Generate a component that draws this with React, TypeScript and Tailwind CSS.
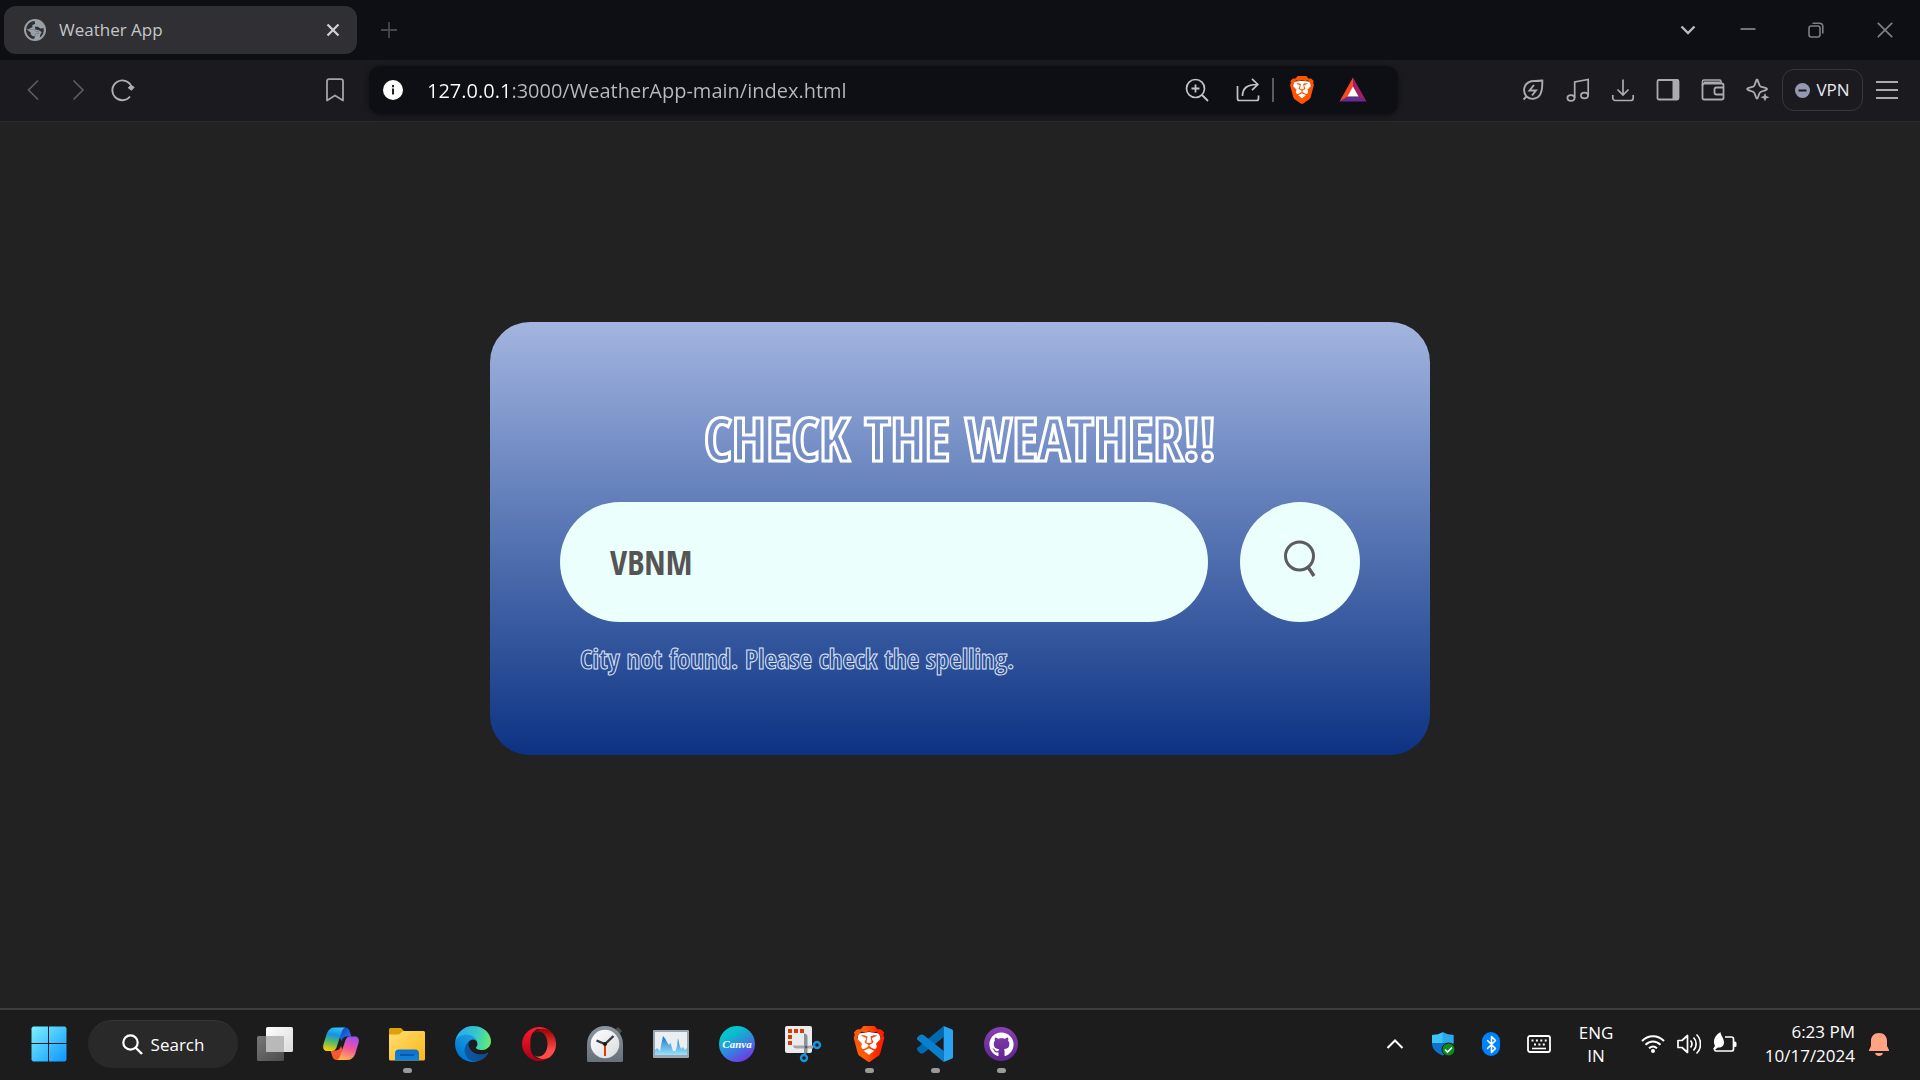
import React, { useState } from "react";
import { Bluetooth } from "lucide-react";
import { SiBrave } from "react-icons/si";
import { FaGithub } from "react-icons/fa";

type SvgProps = { size: number; box?: string; children: React.ReactNode; className?: string };

function Svg({ size, box, children, className }: SvgProps) {
  return (
    <svg width={size} height={size} viewBox={box ?? `0 0 ${size} ${size}`} fill="none" className={className} aria-hidden="true">
      {children}
    </svg>
  );
}

function IconButton({ label, className, children }: { label: string; className: string; children: React.ReactNode }) {
  return (
    <button type="button" aria-label={label} className={`grid shrink-0 place-items-center ${className}`}>
      {children}
    </button>
  );
}

/* ---------- Title bar ---------- */

function TitleBar() {
  return (
    <header className="flex h-[60px] items-center bg-[#0e0f14] pl-1">
      <div className="flex h-12 w-[353px] items-center rounded-xl bg-[#302f33] pr-3 pl-5">
        <Svg size={22} box="0 0 22 22">
          <circle cx="11" cy="11" r="11" fill="#9aa0a8" />
          <path d="M2.200 10C2.600 6 6 2.400 10.500 2.100L11.200 4.800L8.200 6.300L8.500 8.300L6 9.200L5 10.300H10L11.800 12.200H14.300V15H11.500L10.300 19.800C5.500 19.500 2 15.500 2.200 10Z" fill="#302f33" />
          <path d="M2.200 10.500L6.800 14V16L9.500 17.300V19.800C5 19.200 2 15 2.200 10.500Z" fill="#302f33" />
          <path d="M2.300 9.800L5 10.300L10 10.300L11.800 12.200L14.300 12.400V14.800H11.500L10.800 17.300L9 17.200L6.800 15.500V13.800Z" fill="#9aa0a8" />
          <path d="M10.800 7.800H13.800L16.500 9.500L19.700 9.300C20.200 13.500 18.500 17 15.800 18.600L16.300 15.500L17.800 13.300L15.500 11.500L11.500 10.500Z" fill="#302f33" />
        </Svg>
        <span className="ml-[13px] flex-1 text-[17px] text-[#c6c6c8]">Weather App</span>
        <IconButton label="Close tab" className="size-6">
          <Svg size={14}>
            <path d="M1.500 1.500L12.500 12.500M12.500 1.500L1.500 12.500" stroke="#d2d2d4" strokeWidth="2.200" />
          </Svg>
        </IconButton>
      </div>
      <IconButton label="New tab" className="ml-2 size-12">
        <Svg size={16}>
          <path d="M8 0V16M0 8H16" stroke="#47474b" strokeWidth="1.800" />
        </Svg>
      </IconButton>
      <div className="flex-1" />
      <IconButton label="Search tabs" className="h-12 w-12">
        <Svg size={16}>
          <path d="M1.500 4.500L8 11L14.500 4.500" stroke="#b9b9bd" strokeWidth="2.400" />
        </Svg>
      </IconButton>
      <IconButton label="Minimize" className="ml-0.5 h-12 w-[68px]">
        <Svg size={16}>
          <path d="M0.500 7H15.500" stroke="#7f7f83" strokeWidth="1.800" />
        </Svg>
      </IconButton>
      <IconButton label="Restore" className="h-12 w-[68px]">
        <Svg size={16}>
          <rect x="1" y="4" width="11" height="11" rx="2.200" stroke="#7f7f83" strokeWidth="1.600" />
          <path d="M4.500 1.200H11.500A3.300 3.300 0 0 1 14.800 4.500V11.500" stroke="#7f7f83" strokeWidth="1.600" />
        </Svg>
      </IconButton>
      <IconButton label="Close window" className="h-12 w-[70px]">
        <Svg size={16}>
          <path d="M0.800 0.800L15.200 15.200M15.200 0.800L0.800 15.200" stroke="#7f7f83" strokeWidth="1.700" />
        </Svg>
      </IconButton>
    </header>
  );
}

/* ---------- Toolbar ---------- */

function BraveMark({ size, gradient }: { size: number; gradient?: boolean }) {
  return (
    <span className="relative grid place-items-center">
      <Svg size={size} box="0 0 24 24" className="absolute">
        <path d="M5 5L12 4L19 5L20 10L17 17L12 21L7 17L4 10Z" fill="#fff" />
      </Svg>
      <svg width="0" height="0" className="absolute" aria-hidden="true">
        <defs>
          <linearGradient id="brave" x1="0" x2="1" y1="0" y2="0">
            <stop offset="0.4" stopColor="#ff5a0a" />
            <stop offset="0.8" stopColor="#ff2000" />
          </linearGradient>
        </defs>
      </svg>
      <SiBrave size={size} fill={gradient ? "url(#brave)" : "#ff5500"} className="relative" />
    </span>
  );
}

function Toolbar() {
  const [url, setUrl] = useState("127.0.0.1:3000/WeatherApp-main/index.html");
  return (
    <nav aria-label="Browser toolbar" className="flex h-[62px] items-center border-b border-[#29282b] bg-[#1b1b1f] pb-px">
      <div className="flex w-[369px] shrink-0 pr-3 pl-[10px]">
        <IconButton label="Back" className="h-12 w-[45px]">
          <Svg size={22}>
            <path d="M16 1.500L6.500 11L16 20.500" stroke="#5c5c60" strokeWidth="1.700" />
          </Svg>
        </IconButton>
        <IconButton label="Forward" className="h-12 w-[45px]">
          <Svg size={22}>
            <path d="M6.500 1.500L16 11L6.500 20.500" stroke="#5c5c60" strokeWidth="1.700" />
          </Svg>
        </IconButton>
        <IconButton label="Reload" className="h-12 w-[45px]">
          <Svg size={24}>
            <path d="M20.400 8.500A9.900 9.900 0 1 0 19 18.500" stroke="#b0afb4" strokeWidth="1.900" />
            <path d="M23.200 9.200L20.500 12.200L17.200 9.800L20 7.500Z" fill="#b0afb4" stroke="#b0afb4" strokeWidth="1" strokeLinejoin="round" />
          </Svg>
        </IconButton>
        <div className="flex-1" />
        <IconButton label="Bookmark this page" className="h-12 w-[45px]">
          <Svg size={24}>
            <path d="M4 3.500C4 2 5 1.200 6.200 1.200H17.800C19 1.200 20 2 20 3.500V22.500L12 17.500L4 22.500Z" stroke="#a5a4a9" strokeWidth="1.800" strokeLinejoin="round" />
          </Svg>
        </IconButton>
      </div>

      <div className="flex h-12 min-w-0 flex-1 items-center rounded-xl bg-[#0e0f14] pr-[21px] pl-[14px] shadow-[0_1px_5px_rgba(0,0,0,0.5)]">
        <IconButton label="Site information" className="size-5">
          <Svg size={20}>
            <circle cx="10" cy="10" r="10" fill="#fff" />
            <path d="M10 5V7.200M10 8.500V14.500" stroke="#222" strokeWidth="2" />
          </Svg>
        </IconButton>
        <input
          aria-label="Address"
          value={url}
          onChange={(e) => setUrl(e.target.value)}
          className="ml-6 h-8 min-w-0 flex-1 bg-[linear-gradient(to_right,#ffffff_82px,#b9babd_82px)] bg-clip-text text-[20px] text-transparent caret-white outline-none"
        />
        <IconButton label="Zoom" className="size-12">
          <Svg size={24}>
            <circle cx="10.500" cy="10.500" r="9" stroke="#c4c4c8" strokeWidth="1.700" />
            <path d="M17 17L23 23M10.500 6.500V14.500M6.500 10.500H14.500" stroke="#c4c4c8" strokeWidth="1.800" />
          </Svg>
        </IconButton>
        <IconButton label="Share" className="ml-[3px] size-12">
          <Svg size={24}>
            <path d="M1.500 8V20.500A2 2 0 0 0 3.500 22.500H20.500A2 2 0 0 0 22.500 20.500V17.500" stroke="#c4c4c8" strokeWidth="1.700" />
            <path d="M6.500 18C6.500 10 11 6.500 21 6.500M16 0.800L21.800 6.500L16 12.200" stroke="#c4c4c8" strokeWidth="1.700" />
          </Svg>
        </IconButton>
        <span className="h-6 w-0.5 bg-[#5b5b60]" />
        <IconButton label="Brave Shields" className="ml-1 size-12">
          <BraveMark size={28} />
        </IconButton>
        <IconButton label="Brave Rewards" className="ml-[3px] size-12">
          <Svg size={28}>
            <path d="M14 1.500V13.500L9 21L0.500 25.500Z" fill="#ff4724" />
            <path d="M14 1.500V13.500L19 21L27.500 25.500Z" fill="#9e1f63" />
            <path d="M0.500 25.500L8.500 20.500H19.500L27.500 25.500Z" fill="#662d91" />
            <path d="M14 10.500L19.500 20.500H8.500Z" fill="#fff" />
          </Svg>
        </IconButton>
      </div>

      <div className="flex w-[522px] shrink-0 items-center justify-end pr-[9px] text-[#acabb0]">
        <IconButton label="Energy saver" className="h-12 w-[45px]">
          <Svg size={22}>
            <path d="M1.500 20.500L4.500 17.500M4.500 17.500C-0.500 11 2.500 2 12.500 2C15.500 2 18 1.800 20.300 1.500C20.500 8 20.500 12.500 17.500 16.500C14.500 20.500 8.500 21 4.500 17.500Z" stroke="currentColor" strokeWidth="1.900" />
            <path d="M12 6L7.500 11.500H14L10 16.500" stroke="currentColor" strokeWidth="1.900" />
          </Svg>
        </IconButton>
        <IconButton label="Media controls" className="h-12 w-[45px]">
          <Svg size={24}>
            <ellipse cx="5" cy="20" rx="3.600" ry="2.800" stroke="currentColor" strokeWidth="1.700" />
            <ellipse cx="18.500" cy="17.500" rx="3.600" ry="2.800" stroke="currentColor" strokeWidth="1.700" />
            <path d="M8.700 20V4L22.200 1.500V17.500" stroke="currentColor" strokeWidth="1.700" />
          </Svg>
        </IconButton>
        <IconButton label="Downloads" className="h-12 w-[45px]">
          <Svg size={24}>
            <path d="M12 1.500V17M6.500 11.500L12 17L17.500 11.500" stroke="currentColor" strokeWidth="1.700" />
            <path d="M1.800 17V20A2.500 2.500 0 0 0 4.300 22.500H19.700A2.500 2.500 0 0 0 22.200 20V17" stroke="currentColor" strokeWidth="1.700" />
          </Svg>
        </IconButton>
        <IconButton label="Sidebar" className="h-12 w-[45px]">
          <Svg size={24}>
            <rect x="1.500" y="2" width="21" height="19.500" rx="1.500" stroke="currentColor" strokeWidth="1.800" />
            <rect x="16.500" y="2" width="6" height="19.500" fill="currentColor" />
          </Svg>
        </IconButton>
        <IconButton label="Wallet" className="h-12 w-[45px]">
          <Svg size={24}>
            <rect x="1.500" y="5.500" width="21" height="16" rx="1.800" stroke="currentColor" strokeWidth="1.800" />
            <path d="M1.500 8V3.500A1.500 1.500 0 0 1 3 2H18.500A1.500 1.500 0 0 1 20 3.500V6M3 4.200H19" stroke="currentColor" strokeWidth="1.600" />
            <path d="M22.500 9.500H15.500A2 2 0 0 0 13.500 11.500V14.500A2 2 0 0 0 15.500 16.500H22.500" stroke="currentColor" strokeWidth="1.800" />
          </Svg>
        </IconButton>
        <IconButton label="Leo AI" className="mr-0.5 h-12 w-[45px]">
          <Svg size={24}>
            <path d="M11 1.500C12.300 1.500 12.500 7.500 14.500 8.500C16.500 9.500 21 9.500 21 11C21 12.500 16.500 12.800 14.500 14C12.500 15 12.500 20.500 11 20.500C9.500 20.500 9.500 15 7.500 14C5.500 12.800 1.200 12.500 1.200 11C1.200 9.500 5.500 9.500 7.500 8.500C9.500 7.500 9.700 1.500 11 1.500Z" stroke="currentColor" strokeWidth="1.900" />
            <path d="M19 15L20.200 18L23.500 19.200L20.200 20.400L19 23.500L17.800 20.400L14.500 19.200L17.800 18Z" fill="currentColor" />
          </Svg>
        </IconButton>
        <button type="button" className="flex h-[42px] w-[81px] items-center justify-center gap-1.5 rounded-xl border border-[#37363b] text-[17px] text-[#e9e9ee]">
          <Svg size={15}>
            <circle cx="7.500" cy="7.500" r="7.500" fill="#9698b2" />
            <path d="M3.500 7.500H11.500" stroke="#1b1b1f" strokeWidth="2" />
          </Svg>
          VPN
        </button>
        <IconButton label="Main menu" className="size-12">
          <Svg size={24}>
            <path d="M1 4H23M1 12H23M1 20H23" stroke="currentColor" strokeWidth="1.800" />
          </Svg>
        </IconButton>
      </div>
    </nav>
  );
}

/* ---------- Weather card ---------- */

function WeatherCard() {
  const [city, setCity] = useState("VBNM");
  return (
    <section className="w-full max-w-[940px] rounded-[40px] bg-linear-to-b from-[#a3b5e0] to-[#0b3283] px-[70px] pt-20 pb-20 font-['Open_Sans_Condensed','Roboto_Condensed','Open_Sans',sans-serif]">
      <h1 className="text-center text-[60px] leading-[72px] font-bold text-transparent [-webkit-text-stroke:3px_white]">
        CHECK THE WEATHER!!
      </h1>
      <form className="mt-7 flex gap-8" onSubmit={(e) => e.preventDefault()}>
        <input
          aria-label="City"
          value={city}
          onChange={(e) => setCity(e.target.value)}
          className="h-[120px] min-w-0 flex-1 rounded-full bg-[#ebfffc] px-[50px] text-[34px] font-bold text-[#555555] outline-none"
        />
        <IconButton label="Search" className="size-[120px] rounded-full bg-[#ebfffc]">
          <Svg size={46}>
            <circle cx="22.500" cy="17" r="14" stroke="#5c5c5c" strokeWidth="3" />
            <path d="M31 28L37 37" stroke="#5c5c5c" strokeWidth="3.400" />
          </Svg>
        </IconButton>
      </form>
      <p role="alert" className="mt-5 ml-5 text-[27px] leading-[33px] font-bold text-transparent [-webkit-text-stroke:1px_#dfe6f5]">
        City not found. Please check the spelling.
      </p>
    </section>
  );
}

/* ---------- Taskbar icons ---------- */

const Start = (
  <Svg size={36}>
    <defs>
      <linearGradient id="win" x1="0" y1="0" x2="36" y2="36" gradientUnits="userSpaceOnUse">
        <stop stopColor="#7df3ff" />
        <stop offset="1" stopColor="#0a94ff" />
      </linearGradient>
    </defs>
    <path d="M2 0.500H17V17H0.500V2ZM18 0.500H34L35.500 2V17H18ZM0.500 18H17V35.500H2L0.500 34ZM18 18H35.500V34L34 35.500H18Z" fill="url(#win)" />
  </Svg>
);

const TaskView = (
  <Svg size={36}>
    <defs>
      <linearGradient id="tv" x1="0" y1="0" x2="1" y2="1">
        <stop stopColor="#fff" />
        <stop offset="1" stopColor="#d9d9d9" />
      </linearGradient>
      <linearGradient id="tv2" x1="0" y1="0" x2="1" y2="1">
        <stop stopColor="#777" />
        <stop offset="1" stopColor="#4c4c4c" />
      </linearGradient>
    </defs>
    <rect x="0" y="10" width="27" height="25" rx="1.500" fill="url(#tv2)" />
    <rect x="9" y="1" width="27" height="25" rx="1.500" fill="url(#tv)" />
    <path d="M9 10H27V26H9Z" fill="#b9b9b9" />
  </Svg>
);

const Copilot = (
  <Svg size={36}>
    <defs>
      <linearGradient id="cp1" x1="0.500" y1="0" x2="0.300" y2="1">
        <stop stopColor="#2cc1f2" />
        <stop offset="0.300" stopColor="#1592e6" />
        <stop offset="0.600" stopColor="#52b86a" />
        <stop offset="1" stopColor="#ffd000" />
      </linearGradient>
      <linearGradient id="cp2" x1="0.700" y1="0" x2="0.400" y2="1">
        <stop stopColor="#a04ff0" />
        <stop offset="0.500" stopColor="#f0559c" />
        <stop offset="1" stopColor="#ffb14a" />
      </linearGradient>
      <linearGradient id="cp3" x1="0" y1="0" x2="1" y2="1">
        <stop stopColor="#0b3fc4" />
        <stop offset="1" stopColor="#2c7df0" />
      </linearGradient>
    </defs>
    <path d="M17 1.500H22C25.500 1.500 26.500 4 27.300 7L28.300 10.500H24C21 10.500 19.500 12 18.500 15L16 10Z" fill="url(#cp3)" />
    <path d="M19 34H13.500C10.500 34 9.500 31 8.500 28L7.500 24.500H12C15 24.500 17 23 18 20L20.500 26Z" fill="#f4582f" />
    <path d="M12 1.500H23C20.500 1.500 19.300 4 18.300 7L13.500 21.500C12.500 24 11 25 8.500 25H4C0.500 25 -0.500 22 0.500 18L4 7C5.500 3.500 8 1.500 12 1.500Z" fill="url(#cp1)" />
    <path d="M24 34H13C15.500 34 16.700 31.500 17.700 28.500L22.500 14C23.500 11.500 25 10.500 27.500 10.500H32C35.500 10.500 36.500 13.500 35.500 17L32 28.500C30.500 32 28 34 24 34Z" fill="url(#cp2)" />
  </Svg>
);

const Explorer = (
  <Svg size={36}>
    <defs>
      <linearGradient id="fe" x1="0" y1="0" x2="1" y2="1">
        <stop stopColor="#ffdf73" />
        <stop offset="1" stopColor="#fdb614" />
      </linearGradient>
      <linearGradient id="fe2" x1="0" y1="0" x2="0" y2="1">
        <stop stopColor="#0b6fd0" />
        <stop offset="1" stopColor="#1284d8" />
      </linearGradient>
    </defs>
    <path d="M0 3.500A1.500 1.500 0 0 1 1.500 2H12L15 5L13 9H0Z" fill="#e0a106" />
    <path d="M0 8.500H10L14 5H34.500A1.500 1.500 0 0 1 36 6.500V33A1.500 1.500 0 0 1 34.500 34.500H1.500A1.500 1.500 0 0 1 0 33Z" fill="url(#fe)" />
    <path d="M6 34.500V27.500A4 4 0 0 1 10 23.500H26A4 4 0 0 1 30 27.500V34.500Z" fill="url(#fe2)" />
    <path d="M11 29H25" stroke="#064d96" strokeWidth="1.500" />
  </Svg>
);

const Edge = (
  <Svg size={36} box="0 0 256 256">
    <defs>
      <linearGradient id="ed1" x1="58" y1="177" x2="236" y2="177" gradientUnits="userSpaceOnUse">
        <stop stopColor="#0c59a4" />
        <stop offset="1" stopColor="#114a8b" />
      </linearGradient>
      <linearGradient id="ed2" x1="157" y1="99" x2="46" y2="221" gradientUnits="userSpaceOnUse">
        <stop stopColor="#1b9de2" />
        <stop offset="0.300" stopColor="#1595df" />
        <stop offset="1" stopColor="#0078d4" />
      </linearGradient>
      <linearGradient id="ed3" x1="20" y1="60" x2="250" y2="120" gradientUnits="userSpaceOnUse">
        <stop stopColor="#2aaeea" />
        <stop offset="0.500" stopColor="#32c6cf" />
        <stop offset="1" stopColor="#66eb6e" />
      </linearGradient>
    </defs>
    <path fill="url(#ed1)" d="M231 190.500c-3.400 1.800-6.900 3.400-10.500 4.700a101.700 101.700 0 0 1-35.900 6.500c-47.300 0-88.500-32.500-88.500-74.300a31.500 31.500 0 0 1 16.400-27.300c-42.800 1.800-53.800 46.400-53.800 72.500 0 74 68.100 81.400 82.800 81.400 7.900 0 19.800-2.300 27-4.500l1.300-.4A128.300 128.300 0 0 0 236 194.700a4 4 0 0 0-5-4.200z" />
    <path fill="url(#ed2)" d="M105.700 241.400A79.200 79.200 0 0 1 83 220.100 80.700 80.700 0 0 1 112.500 100.100c3.200-1.500 8.500-4.200 15.600-4.100a32.400 32.400 0 0 1 25.700 13 31.900 31.900 0 0 1 6.300 18.700c0-.2 24.500-79.600-80-79.600-43.900 0-80 41.700-80 78.200a130.200 130.200 0 0 0 12.100 56 128 128 0 0 0 156.400 67 75.500 75.500 0 0 1-62.800-8z" />
    <path fill="url(#ed3)" d="M152.300 148.900c-.9 1-3.400 2.500-3.400 5.600 0 2.600 1.700 5.200 4.800 7.300 14.300 10 41.400 8.600 41.500 8.600a59.600 59.600 0 0 0 30.300-8.300 61.400 61.400 0 0 0 30.400-52.900c.3-22.400-8-37.300-11.300-43.900C223.500 23.900 177.700 0 128 0A128 128 0 0 0 0 126.200c.5-36.500 36.800-66 80-66 3.500 0 23.500.3 42 10.100 16.300 8.600 24.900 18.900 30.800 29.200 6.200 10.700 7.300 24.100 7.300 29.500 0 5.300-2.700 13.300-7.800 19.900z" />
  </Svg>
);

const Opera = (
  <Svg size={36}>
    <defs>
      <linearGradient id="op1" x1="0" y1="0" x2="0" y2="1">
        <stop stopColor="#ff1b2d" />
        <stop offset="1" stopColor="#a70014" />
      </linearGradient>
      <linearGradient id="op2" x1="0" y1="0" x2="0" y2="1">
        <stop stopColor="#9c0000" />
        <stop offset="0.700" stopColor="#ff4b4b" />
      </linearGradient>
    </defs>
    <path d="M18 1A17 17 0 1 0 29 31L24 29A8.500 13 0 0 1 9.500 18A8.500 13 0 0 1 24 7L29 5A17 17 0 0 0 18 1Z" fill="url(#op1)" />
    <path d="M12.500 7.500C19 1 27 3 29.400 5.300A17 17 0 0 1 29.400 30.700C26.500 33 19 35 12.500 28.500C18 33.500 26.500 29 26.500 18S18 2.500 12.500 7.500Z" fill="url(#op2)" />
  </Svg>
);

const Clock = (
  <Svg size={36}>
    <defs>
      <linearGradient id="ck" x1="0" y1="0" x2="0" y2="1">
        <stop stopColor="#8c969e" />
        <stop offset="1" stopColor="#65717b" />
      </linearGradient>
      <linearGradient id="ck2" x1="0" y1="0" x2="1" y2="1">
        <stop stopColor="#fff" />
        <stop offset="1" stopColor="#d8dbde" />
      </linearGradient>
    </defs>
    <path d="M28 4L31 1L35 5L32.500 8Z" fill="#4a4d50" />
    <path d="M0 18A18 18 0 0 1 36 18V34.500A1.500 1.500 0 0 1 34.500 36H1.500A1.500 1.500 0 0 1 0 34.500Z" fill="url(#ck)" />
    <circle cx="18" cy="18" r="14.300" fill="url(#ck2)" />
    <path d="M18 19V30" stroke="#e03c00" strokeWidth="2" />
    <path d="M9.500 14.500L18 18L26.500 10" stroke="#333a40" strokeWidth="2.400" />
    <circle cx="18" cy="18" r="2" fill="#1a1a1a" />
  </Svg>
);

const Monitor = (
  <Svg size={36}>
    <defs>
      <linearGradient id="tm" x1="0" y1="0" x2="0" y2="1">
        <stop stopColor="#1877c9" />
        <stop offset="1" stopColor="#9be1ff" />
      </linearGradient>
    </defs>
    <rect x="0" y="4" width="36" height="28" rx="1" fill="#9aa7b1" />
    <rect x="2" y="6" width="32" height="23" fill="#eceff2" />
    <path d="M2 24L4 22L7 25L8.500 17L10 10L12.500 13L14 16L16 19L17.500 17L20 25H22.500L24 20L25 12L26.500 19L28 23L30 21L32 24L34 22V29H2Z" fill="url(#tm)" />
  </Svg>
);

const Canva = (
  <span className="relative grid size-9 place-items-center">
    <Svg size={36} className="absolute">
      <defs>
        <linearGradient id="cv" x1="0.200" y1="0" x2="0.800" y2="1">
          <stop offset="0.200" stopColor="#04c3cc" />
          <stop offset="0.600" stopColor="#3a7de0" />
          <stop offset="1" stopColor="#7d2ae8" />
        </linearGradient>
      </defs>
      <circle cx="18" cy="18" r="18" fill="url(#cv)" />
    </Svg>
    <span className="relative font-['Liberation_Serif',serif] text-[11px] font-bold text-white italic">Canva</span>
  </span>
);

const Snip = (
  <Svg size={36} className="overflow-visible">
    <rect x="0" y="0" width="27" height="27" rx="2" fill="#e9ebee" />
    <path d="M3 3H7V7H3ZM9 3H13V7H9ZM15 3H19V7H15ZM3 9H7V13H3ZM3 15H7V19H3Z" fill="#d83b01" />
    <path d="M19 7.500C21.500 7.500 22.500 9 22.500 11V27L19 28Z" fill="#8d9196" />
    <path d="M8 19.500C8 21.500 9.500 22.500 11.500 22.500H28L29 19.500H12Z" fill="#a4a8ac" />
    <circle cx="21" cy="21" r="1.500" fill="#55595e" />
    <circle cx="32" cy="19" r="3" stroke="#1a93dd" strokeWidth="2.400" />
    <circle cx="19" cy="32" r="3" stroke="#1a93dd" strokeWidth="2.400" />
  </Svg>
);

const VsCode = (
  <Svg size={36} box="0 0 108 108">
    <path d="M80 0V33L21 80C16 84 11 83 8 80L2 74C-1 71 -1 67 3 64Z" fill="#0069b0" />
    <path d="M3 43C-1 40 -1 36 2 33L8 28C11 25 16 24 21 28L80 75V108Z" fill="#0a80cc" />
    <path d="M80 0L104 10C107 11 108 13 108 16V92C108 95 107 97 104 98L80 108Z" fill="#28a4f2" />
  </Svg>
);

const GitHub = (
  <span className="grid size-[34px] place-items-center rounded-full bg-linear-to-b from-[#8a3fb5] to-[#5e2590] text-white">
    <FaGithub size={25} />
  </span>
);

const apps = [
  { name: "Task view", icon: TaskView, open: false },
  { name: "Copilot", icon: Copilot, open: false },
  { name: "File Explorer", icon: Explorer, open: true },
  { name: "Microsoft Edge", icon: Edge, open: false },
  { name: "Opera", icon: Opera, open: false },
  { name: "Clock", icon: Clock, open: false },
  { name: "Task Manager", icon: Monitor, open: false },
  { name: "Canva app", icon: Canva, open: false },
  { name: "Snipping Tool", icon: Snip, open: false },
  { name: "Brave", icon: <BraveMark size={36} gradient />, open: true },
  { name: "Visual Studio Code", icon: VsCode, open: true },
  { name: "GitHub Desktop", icon: GitHub, open: true },
];

function Taskbar() {
  return (
    <footer className="flex h-[72px] items-center border-t-2 border-[#3e3e3e] bg-[#1c1c1c] pb-0.5 text-white">
      <IconButton label="Start" className="ml-[17px] size-16">
        {Start}
      </IconButton>
      <button type="button" className="ml-[7px] flex h-12 w-[150px] shrink-0 items-center justify-center gap-2 rounded-full border-t border-[#343434] bg-[#292929] text-[17px]">
        <Svg size={21}>
          <circle cx="8.500" cy="8.500" r="7.200" stroke="#fff" strokeWidth="2.200" />
          <path d="M13.500 13.500L20 20" stroke="#fff" strokeWidth="2.400" />
        </Svg>
        Search
      </button>
      <div className="ml-1 flex">
        {apps.map((app) => (
          <button key={app.name} type="button" aria-label={app.name} className="relative grid h-[68px] w-[66px] place-items-center">
            {app.icon}
            {app.open && <span className="absolute bottom-[5px] h-[5px] w-[9px] rounded-full bg-[#9a9a9a]" />}
          </button>
        ))}
      </div>
      <div className="flex-1" />
      <IconButton label="Show hidden icons" className="h-12 w-12">
        <Svg size={18}>
          <path d="M1.500 13L9 5.500L16.500 13" stroke="#fff" strokeWidth="2" />
        </Svg>
      </IconButton>
      <IconButton label="Windows Security" className="h-12 w-12">
        <Svg size={24}>
          <path d="M1 3C5 3 8 2.500 11.800 0.300C15.500 2.500 19 3 22.500 3V11H1Z" fill="#1b93e0" />
          <path d="M1 3C5 3 8 2.500 11.800 0.300V11H1Z" fill="#3cc4f4" />
          <path d="M11.800 0.300C15.500 2.500 19 3 22.500 3V11H11.800Z" fill="#2ba9ea" />
          <path d="M1 11H22.500C22.500 17 18 21 11.800 23.500C5 21 1 17 1 11Z" fill="#0b72cf" />
          <circle cx="17.500" cy="17.500" r="6.500" fill="#0f8a1c" stroke="#1c1c1c" />
          <path d="M14 17.500L16.500 20L21 15.500" stroke="#fff" strokeWidth="1.600" />
        </Svg>
      </IconButton>
      <IconButton label="Bluetooth" className="h-12 w-12">
        <span className="grid h-6 w-[18px] place-items-center rounded-full bg-[#0082fc]">
          <Bluetooth size={19} strokeWidth={2} />
        </span>
      </IconButton>
      <IconButton label="Touch keyboard" className="h-12 w-12">
        <Svg size={24}>
          <rect x="1" y="4" width="22" height="16" rx="2" stroke="#fff" strokeWidth="1.800" />
          <path d="M4.500 8.500H20M7 12.500H18" stroke="#fff" strokeWidth="2" strokeDasharray="2 2.400" />
          <path d="M5 16.500H19" stroke="#fff" strokeWidth="1.600" />
        </Svg>
      </IconButton>
      <button type="button" className="h-14 w-[66px] text-center text-[17px] leading-[23px]">
        ENG
        <br />
        IN
      </button>
      <button type="button" aria-label="Network, sound and battery" className="ml-[6px] flex h-12 w-[108px] items-center justify-around">
        <Svg size={24}>
          <path d="M1 9C7 2.500 17 2.500 23 9M4.500 12.800C9 8.500 15 8.500 19.500 12.800M8 16.300C10.500 14 13.500 14 16 16.300" stroke="#fff" strokeWidth="2" />
          <circle cx="12" cy="19" r="2" fill="#fff" />
        </Svg>
        <Svg size={24}>
          <path d="M1 8.500H5L10.500 3.500V20.500L5 15.500H1Z" stroke="#fff" strokeWidth="1.700" strokeLinejoin="round" />
          <path d="M13.500 8.500C15.200 10.500 15.200 13.500 13.500 15.500M16.500 5.500C20 9 20 15 16.500 18.500M19.500 2.500C24.800 7.500 24.800 16.500 19.500 21.500" stroke="#fff" strokeWidth="1.700" />
        </Svg>
        <Svg size={24}>
          <path d="M12 5H18.500A2 2 0 0 1 20.500 7V17A2 2 0 0 1 18.500 19H3A2 2 0 0 1 1.500 17.500" stroke="#fff" strokeWidth="1.700" />
          <path d="M20.500 9.500H22A1.500 1.500 0 0 1 23.500 11V13.500A1.500 1.500 0 0 1 22 15H20.500Z" fill="#fff" />
          <path d="M7.500 0C7.500 3 11 6 11 10.500C11 14 8 16 5 15.500L1.500 18L0 17L2 14C-0.500 9 1.500 3.500 7.500 0Z" fill="#fff" />
        </Svg>
      </button>
      <button type="button" className="h-14 w-[112px] text-right text-[17px] leading-6 whitespace-nowrap">
        6:23 PM
        <br />
        10/17/2024
      </button>
      <IconButton label="Notifications" className="mr-[17px] h-12 w-12">
        <Svg size={24}>
          <path d="M12 1C7 1 4 4.500 4 9V14L2 18V19H22V18L20 14V9C20 4.500 17 1 12 1Z" fill="#ffa382" />
          <path d="M8 21H16C15.500 23 14 24 12 24S8.500 23 8 21Z" fill="#ffa382" />
        </Svg>
      </IconButton>
    </footer>
  );
}

export default function App() {
  return (
    <div className="flex min-h-screen flex-col bg-[#222222] font-['Open_Sans','Noto_Sans',sans-serif]">
      <TitleBar />
      <Toolbar />
      <main className="flex flex-1 items-start justify-center pt-[200px]">
        <WeatherCard />
      </main>
      <Taskbar />
    </div>
  );
}
